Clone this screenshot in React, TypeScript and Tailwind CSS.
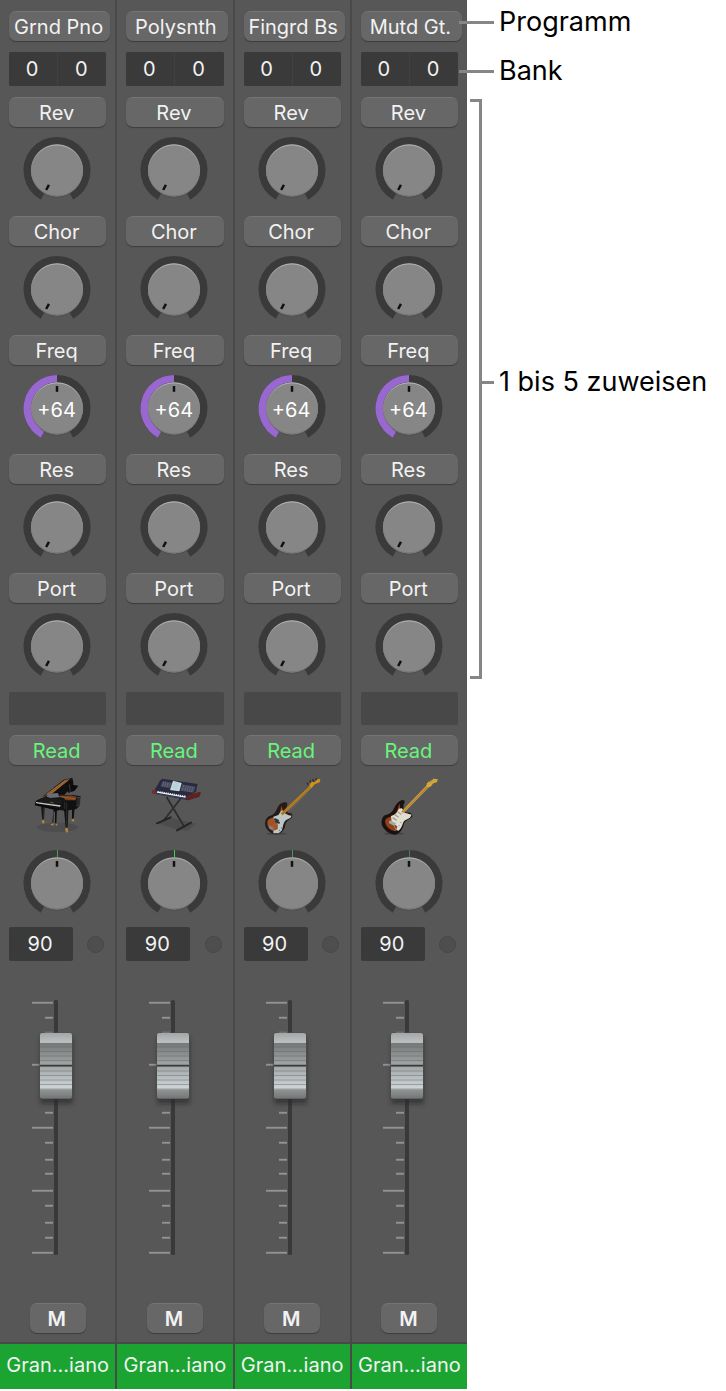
import { useState } from 'react';
import type { ReactNode } from 'react';

const MAX = 128;
const ASSIGNMENTS = [
  { name: 'Rev', value: 0 },
  { name: 'Chor', value: 0 },
  { name: 'Freq', value: 64 },
  { name: 'Res', value: 0 },
  { name: 'Port', value: 0 },
];

// y position and length of every mark next to the fader
const TICKS = [
  [2, 21], [17, 8], [32, 8], [64, 21], [80, 8], [96, 8], [112, 8], [127, 21],
  [142, 8], [159, 8], [173, 8], [190, 21], [205, 8], [222, 8], [237, 8], [252, 21],
];

const buttonClass =
  'h-[30px] rounded-[7px] border-t border-[#757575] bg-[#676767] pr-0.5 text-center text-xl leading-7 shadow-[0_1px_1px_#3c3c3c]';
const fieldClass = 'h-[34px] min-w-0 bg-[#3a3a3a] pr-0.5 text-center text-xl text-[#f2f2f2]';

function point(angle: number, radius: number) {
  const rad = (angle * Math.PI) / 180;
  return `${33 + radius * Math.sin(rad)} ${33.4 - radius * Math.cos(rad)}`;
}

function arc(from: number, to: number) {
  return `M${point(from, 29.8)} A29.8 29.8 0 ${to - from > 180 ? 1 : 0} 1 ${point(to, 29.8)}`;
}

function Knob({ label, initial, showValue, pan }: { label: string; initial: number; showValue?: boolean; pan?: string }) {
  const [value, setValue] = useState(initial);
  const angle = -151 + (302 * value) / MAX;

  return (
    <div className="relative mx-auto h-16 w-[67px]">
      <svg className="block h-16 w-[67px] overflow-visible" viewBox="0 0 67 64" aria-hidden="true">
        <defs>
          <linearGradient id="knobEdge" x1="0" y1="0" x2="0" y2="1">
            <stop offset="0" stopColor="#b4b4b4" />
            <stop offset="0.3" stopColor="#8c8c8c" />
            <stop offset="1" stopColor="#777" />
          </linearGradient>
        </defs>
        <path d={arc(-151, 151)} fill="none" stroke="#3a3a3a" strokeWidth="7.4" />
        {showValue && value > 0 && <path d={arc(-151, angle)} fill="none" stroke="#9867cf" strokeWidth="7.4" />}
        {pan && <path d="M33.5 0V7" stroke={pan} strokeWidth="1" />}
        <ellipse cx="33" cy="36" rx="24" ry="25" fill="#4b4b4b" opacity="0.5" />
        <circle cx="33" cy="33.4" r="26" fill="#868686" />
        <circle cx="33" cy="33.4" r="25.5" fill="none" stroke="url(#knobEdge)" />
        <path d="M33 11v5.8" stroke="#111" strokeWidth="2.5" transform={`rotate(${angle} 33 33.4)`} />
      </svg>
      {showValue && (
        <span className="absolute inset-x-0 top-[21px] pr-0.5 text-center text-xl leading-7 text-white">+{value}</span>
      )}
      <input
        type="range"
        min={0}
        max={MAX}
        value={value}
        aria-label={label}
        onChange={(e) => setValue(Number(e.target.value))}
        className="absolute inset-0 h-full w-full cursor-pointer opacity-0"
      />
    </div>
  );
}

function Fader({ value, onChange }: { value: number; onChange: (v: number) => void }) {
  const top = 33 + (90 - value) * 1.4;

  return (
    <div className="relative mx-auto h-[255px] w-16">
      <svg className="block h-[255px] w-16 overflow-visible" viewBox="26 0 64 255" aria-hidden="true">
        <defs>
          <linearGradient id="capTop" x1="0" y1="0" x2="0" y2="1">
            <stop offset="0" stopColor="#a3a6a6" />
            <stop offset="1" stopColor="#bcc1c2" />
          </linearGradient>
          <linearGradient id="capUpper" x1="0" y1="0" x2="0" y2="1">
            <stop offset="0" stopColor="#777979" />
            <stop offset="1" stopColor="#a2a5a5" />
          </linearGradient>
          <linearGradient id="capLower" x1="0" y1="0" x2="0" y2="1">
            <stop offset="0" stopColor="#a3a7a7" />
            <stop offset="1" stopColor="#cdd5d7" />
          </linearGradient>
          <linearGradient id="capBottom" x1="0" y1="0" x2="0" y2="1">
            <stop offset="0" stopColor="#949797" />
            <stop offset="1" stopColor="#737575" />
          </linearGradient>
          <filter id="capShadow" x="-40%" y="-20%" width="180%" height="150%">
            <feGaussianBlur stdDeviation="2" />
          </filter>
        </defs>
        {TICKS.map(([y, length]) => (
          <rect key={y} x={53 - length} y={y - 0.2} width={length} height="1.9" fill="#929292" />
        ))}
        <rect x="54" y="0" width="4" height="255" rx="1.5" fill="#393939" />
        <g transform={`translate(40 ${top})`}>
          <rect x="0" y="4" width="33" height="67" rx="2" fill="#292929" opacity="0.65" filter="url(#capShadow)" />
          <rect x="-0.5" y="-0.5" width="33" height="66.5" rx="2.5" fill="#4f5151" />
          <path d="M0 9.5V2Q0 0 2 0H30Q32 0 32 2V9.5Z" fill="url(#capTop)" />
          <rect x="0" y="10" width="32" height="22" fill="url(#capUpper)" />
          <rect x="0" y="33.5" width="32" height="22" fill="url(#capLower)" />
          <path d="M0 56H32V63Q32 65.5 30 65.5H2Q0 65.5 0 63.5Z" fill="url(#capBottom)" />
          <path d="M0 9.5H32M0 55.7H32" stroke="#d0d5d6" strokeWidth="0.7" />
          <path
            d="M0 14h32M0 18.5h32M0 23h32M0 27.5h32M0 38h32M0 42.5h32M0 47h32M0 51.5h32"
            stroke="#606464"
            strokeWidth="0.8"
            opacity="0.55"
          />
          <path d="M0 32.5H32" stroke="#393b3b" strokeWidth="1.5" />
        </g>
      </svg>
      <input
        type="range"
        min={0}
        max={113}
        value={value}
        aria-label="Volume"
        onChange={(e) => onChange(Number(e.target.value))}
        className="absolute inset-0 h-full w-full cursor-pointer opacity-0 [direction:rtl] [writing-mode:vertical-lr]"
      />
    </div>
  );
}

function Picture({ viewBox, children }: { viewBox: string; children: ReactNode }) {
  return (
    <svg className="mx-auto block h-[60px] w-20" viewBox={viewBox} aria-hidden="true">
      {children}
    </svg>
  );
}

function Piano() {
  return (
    <Picture viewBox="-9 15 240 180">
      <ellipse cx="110" cy="172" rx="62" ry="14" fill="#494949" opacity="0.7" />
      <path d="M66 79L128 29L154 23L157 39L112 80Z" fill="#171412" />
      <path d="M70 77L130 31L149 25L88 76Z" fill="#87562a" />
      <path d="M94 73L147 31L156 31L157 45L130 75Z" fill="#0f0f10" />
      <path d="M78 72L133 32M89 70L141 31" stroke="#b67c38" strokeWidth="2" />
      <path d="M137 57L153 44L172 47L161 62L143 69Z" fill="#0c0c0d" />
      <path d="M145 44L150 79" stroke="#8b8b8b" strokeWidth="1" />
      <path d="M107 77L151 74L179 79L177 106L166 117L130 123L108 98Z" fill="#111" />
      <path d="M110 79L149 76L167 80L164 91L124 91Z" fill="#75401f" />
      <path d="M119 80L162 87" stroke="#b16c35" strokeWidth="2" />
      <path d="M167 82H178V105L166 108" fill="#292929" stroke="#888" strokeWidth="1" />
      <path d="M47 91L83 76L129 84L135 94L132 122L98 118L48 104L41 99Z" fill="#131314" />
      <path d="M81 71L111 69L115 82L86 84L77 80Z" fill="#696c79" />
      <path d="M52 95L71 81L126 90L120 103Z" fill="#1b1b1c" />
      <path d="M45 98L118 108" stroke="#d7d7d5" strokeWidth="4" />
      <path d="M51 97L114 106" stroke="#393939" strokeWidth="1.5" strokeDasharray="2 2" />
      <path d="M42 103L113 119" stroke="#08090a" strokeWidth="6" />
      <path d="M60 108L71 112L69 151H64ZM129 117L142 119L140 173H134ZM153 114L161 112L158 147H153ZM98 117L108 118L106 159H102V126L98 125L97 158H94Z" fill="#111" />
      <path d="M131 95V117M137 98V170M67 113V150" stroke="#636363" strokeWidth="1" />
      <path d="M64 149H69L71 158L66 161L62 156ZM154 146H159L160 153L155 155L151 151ZM134 173H140L142 185L137 188L132 181ZM87 164L98 159V167M102 165L109 160V167" fill="#ad8342" />
      <path d="M88 97L98 99" stroke="#bd873d" strokeWidth="2" />
    </Picture>
  );
}

function Keyboard() {
  return (
    <Picture viewBox="-17 15 240 180">
      <path d="M47 159L93 144L167 161L142 182L108 178Z" fill="#494949" opacity="0.7" />
      <path d="M78 81L132 172M126 78L68 153" stroke="#242526" strokeWidth="5" />
      <path d="M81 84L130 166M123 83L71 149" stroke="#4e5051" strokeWidth="1" />
      <path d="M49 160L90 142M109 181L151 158" stroke="#242526" strokeWidth="6" strokeLinecap="round" />
      <path d="M59 31L65 26L171 42L166 65L141 82L37 68Z" fill="#272a41" />
      <path d="M34 66L37 61L139 77L180 65L176 80L142 91L35 70Z" fill="#282b49" />
      <path d="M139 77L180 65L178 78L139 91Z" fill="#66201c" />
      <path d="M35 60L47 61L46 71L34 69Z" fill="#812925" />
      <path d="M67 33L95 38L88 55L59 49ZM124 43L165 50L158 68L119 62Z" fill="#474b62" />
      <path d="M67 37L90 42M66 42L88 46M64 47L85 51M128 48L162 54M126 54L159 60M125 59L155 65" stroke="#b6a083" strokeWidth="2" strokeDasharray="2 5" />
      <path d="M97 32L123 39L116 64L88 60Z" fill="#c8dce2" />
      <path d="M99 38L116 42M98 43L115 47M96 48L113 52M94 53L111 57" stroke="#89a4ab" strokeWidth="1" />
      <path d="M49 65L135 80" stroke="#edf0ed" strokeWidth="6" />
      <path d="M50 63L134 78" stroke="#232331" strokeWidth="3" strokeDasharray="3 3" />
      <path d="M42 71L136 86" stroke="#41466c" strokeWidth="2" />
    </Picture>
  );
}

function Bass() {
  return (
    <Picture viewBox="66 15 240 180">
      <ellipse cx="139" cy="191" rx="31" ry="4" fill="#404040" opacity="0.8" />
      <path d="M157 98C169 94 175 98 171 107C167 118 171 123 177 130C185 126 190 137 185 144C176 151 168 153 166 165C164 181 154 190 140 193C124 193 115 184 107 172C103 158 106 145 117 139C134 134 136 127 143 112C147 104 151 100 157 98Z" fill="#251b17" />
      <path d="M155 107C151 120 151 132 142 139C129 144 113 144 112 157C111 168 119 178 128 183L146 182C157 172 158 159 166 148L159 125Z" fill="#a15228" />
      <path d="M130 140L145 135L156 120L164 130L176 136L185 137L181 144L170 149C160 155 160 166 156 181L146 190L130 190L130 182L143 178C145 166 144 155 132 150Z" fill="#bbc8c8" />
      <path d="M155 133L245 47" stroke="#a86e16" strokeWidth="8" />
      <path d="M156 130L243 46M159 135L248 48" stroke="#cf9b36" strokeWidth="1.5" />
      <path d="M238 47L243 35L254 37L263 27L271 28L269 37L254 43L245 54Z" fill="#d39314" />
      <path d="M235 44L231 39M243 38L239 32M252 34L247 28M260 30L257 25" stroke="#262a2b" strokeWidth="4" />
      <path d="M133 147L146 153M136 154L149 159" stroke="#242b30" strokeWidth="6" />
      <path d="M118 166L132 174L127 180L116 175Z" fill="#778386" />
      <path d="M122 174L239 50M126 177L247 51" stroke="#d0b778" strokeWidth="0.6" opacity="0.7" />
      <path d="M147 181h2M153 174h2" stroke="#333" strokeWidth="3" />
    </Picture>
  );
}

function Guitar() {
  return (
    <Picture viewBox="418 15 240 180">
      <ellipse cx="493" cy="191" rx="31" ry="4" fill="#404040" opacity="0.8" />
      <path d="M511 93C520 87 528 91 524 99C518 111 522 121 530 128C540 125 551 132 547 141C542 148 523 151 522 165C518 180 509 192 496 194C479 193 467 184 458 169C453 158 456 142 465 136C482 131 487 127 494 113C499 103 505 96 511 93Z" fill="#19120f" />
      <path d="M509 100C504 116 504 128 490 136C479 143 468 143 466 154C467 168 480 181 497 184C510 171 516 160 517 145Z" fill="#943d18" />
      <path d="M507 116L517 115L525 128L546 134L541 143L524 152C518 159 519 171 507 182L500 180L503 169L486 158L484 138C497 134 503 128 507 116Z" fill="#e0ded0" />
      <path d="M518 127L598 44" stroke="#b98228" strokeWidth="8" />
      <path d="M519 123L597 42M520 130L601 48" stroke="#dfb75d" strokeWidth="1.5" />
      <path d="M590 48L592 39L606 33L612 27L624 27L622 37L611 40L602 51L594 51Z" fill="#d6a630" />
      <path d="M595 37L614 26" stroke="#dfd5a4" strokeWidth="2" strokeDasharray="3 3" />
      <path d="M496 134L507 142M489 143L501 151M505 126L515 133" stroke="#9d9d94" strokeWidth="4" />
      <path d="M480 151L499 160L494 168L477 159Z" fill="#9ca7aa" />
      <path d="M493 166L499 181M512 158h3M507 167h3" stroke="#819096" strokeWidth="3" />
      <path d="M486 158L596 43M490 161L603 43" stroke="#ebd9a0" strokeWidth="0.6" opacity="0.7" />
    </Picture>
  );
}

const CHANNELS = [
  { program: 'Grnd Pno', picture: <Piano />, pan: '#43a557' },
  { program: 'Polysnth', picture: <Keyboard />, pan: '#35d956' },
  { program: 'Fingrd Bs', picture: <Bass />, pan: '#459b57' },
  { program: 'Mutd Gt.', picture: <Guitar />, pan: '#467d52' },
];

function ChannelStrip({ program, picture, pan }: { program: string; picture: ReactNode; pan: string }) {
  const [volume, setVolume] = useState(90);
  const [muted, setMuted] = useState(false);

  return (
    <section className="min-w-0 flex-1 border-[#494949] text-[#f2f2f2] not-last:border-r-2" aria-label={program}>
      <div className="flex flex-col px-[9px] pt-[11px] pb-[9px]">
        <button className={`${buttonClass} -mr-1 whitespace-nowrap`}>{program}</button>
        <div className="mt-[11px] flex gap-px overflow-hidden rounded-xs bg-[#414141]">
          <input className={`${fieldClass} w-1/2`} defaultValue="0" aria-label="Bank MSB" />
          <input className={`${fieldClass} w-1/2`} defaultValue="0" aria-label="Bank LSB" />
        </div>
        <div className="mt-[11px]">
          {ASSIGNMENTS.map((item) => (
            <div key={item.name} className="flex flex-col gap-2.5 pb-[15px]">
              <button className={buttonClass}>{item.name}</button>
              <Knob label={item.name} initial={item.value} showValue={item.value > 0} />
            </div>
          ))}
        </div>
        <button className="h-[33px] rounded-xs bg-[#484848]" aria-label="Group" />
        <button className={`${buttonClass} my-2.5 text-[#67f57c]`}>Read</button>
        {picture}
        <div className="mt-[15px]">
          <Knob label="Pan" initial={64} pan={pan} />
        </div>
        <div className="mt-[13px] flex items-center justify-between pr-0.5">
          <input
            className={`${fieldClass} w-16 rounded-xs`}
            value={volume}
            aria-label="Volume value"
            onChange={(e) => setVolume(Math.min(113, Number(e.target.value) || 0))}
          />
          <span className="h-[17px] w-[17px] rounded-full border border-[#474747] bg-[#4e4e4e]" />
        </div>
        <div className="mt-[39px]">
          <Fader value={volume} onChange={setVolume} />
        </div>
        <button
          className={`${buttonClass} mx-auto mt-12 w-14 font-semibold`}
          aria-pressed={muted}
          onClick={() => setMuted(!muted)}
        >
          M
        </button>
      </div>
      <div className="h-[47px] border-t-2 border-[#494949] bg-[#1ca432] text-center text-xl leading-[42px] whitespace-nowrap">
        Gran...iano
      </div>
    </section>
  );
}

function Callout({ children }: { children: ReactNode }) {
  return (
    <div className="relative -ml-2 flex items-center gap-[5px]">
      <span className="h-[3px] w-[35px] bg-[#868686]" />
      <span>{children}</span>
    </div>
  );
}

export default function App() {
  return (
    <main className="flex min-h-screen items-start bg-white font-['Inter',sans-serif]">
      <div className="flex min-w-0 flex-1 bg-[#575757]">
        {CHANNELS.map((channel) => (
          <ChannelStrip key={channel.program} {...channel} />
        ))}
      </div>
      <aside className="w-[259px] shrink-0 pt-1 text-[27px] leading-9 whitespace-nowrap text-black">
        <Callout>Programm</Callout>
        <div className="mt-[13px]">
          <Callout>Bank</Callout>
        </div>
        <div className="mt-2.5 ml-[3px] flex h-[580px] items-center">
          <span className="w-3 self-stretch border-3 border-l-0 border-[#868686]" />
          <div className="flex items-center gap-[5px] pb-3.5">
            <span className="h-[3px] w-3 bg-[#868686]" />
            <span>1 bis 5 zuweisen</span>
          </div>
        </div>
      </aside>
    </main>
  );
}
